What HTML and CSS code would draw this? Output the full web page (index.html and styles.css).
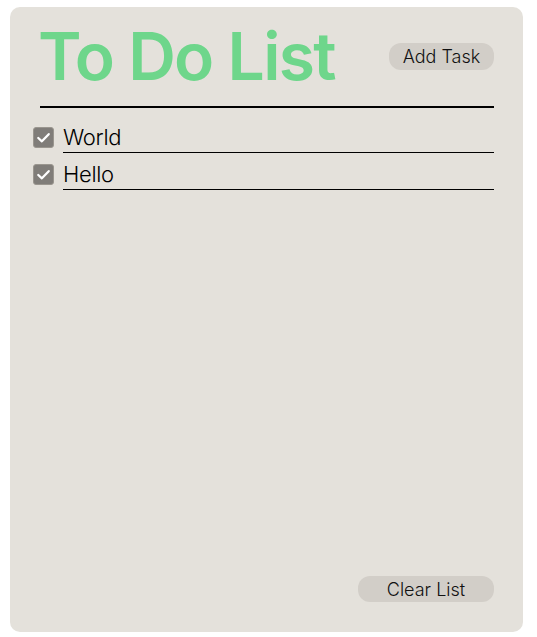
FILE: index.html
```html
<!DOCTYPE html>
<html>
<head>
<meta charset="utf-8">
<link rel="stylesheet" href="styles.css">
</head>
<body>
<div class="card">
  <div class="header">
    <h1 class="title">To Do List</h1>
    <button class="btn add-btn">Add Task</button>
  </div>
  <ul class="list">
    <li class="item">
      <span class="check"><svg viewBox="0 0 20 20" width="19" height="19"><path d="M4.5 10.5 L8.3 14 L15.5 6.5" fill="none" stroke="#fff" stroke-width="2.4" stroke-linecap="round" stroke-linejoin="round"/></svg></span>
      <span class="label">World</span>
    </li>
    <li class="item">
      <span class="check"><svg viewBox="0 0 20 20" width="19" height="19"><path d="M4.5 10.5 L8.3 14 L15.5 6.5" fill="none" stroke="#fff" stroke-width="2.4" stroke-linecap="round" stroke-linejoin="round"/></svg></span>
      <span class="label">Hello</span>
    </li>
  </ul>
  <div class="footer">
    <button class="btn clear-btn">Clear List</button>
  </div>
</div>
</body>
</html>
```
FILE: styles.css
```css
html, body {
  margin: 0;
  padding: 0;
  background: #ffffff;
}
body {
  padding: 7px 14px 5px 10px;
  font-family: "Inter", sans-serif;
}
.card {
  box-sizing: border-box;
  height: 625px;
  background: #e4e1db;
  border-radius: 10px;
  display: flex;
  flex-direction: column;
  padding: 0 29px 30px 23px;
}
.header {
  display: flex;
  align-items: center;
  justify-content: space-between;
  margin-left: 7px;
  height: 99px;
  border-bottom: 2px solid #000;
}
.title {
  margin: 0 0 0 -2px;
  font-size: 66px;
  font-weight: 600;
  color: #6ed68b;
  letter-spacing: -1.7px;
  line-height: 1;
  padding-bottom: 2px;
}
.btn {
  font-family: inherit;
  border: none;
  background: #d2cec8;
  color: #111;
  border-radius: 12px;
  font-size: 18px;
  font-weight: 300;
  padding: 0;
  cursor: pointer;
}
.add-btn {
  width: 105px;
  height: 27px;
  margin-top: 0;
}
.list {
  list-style: none;
  margin: 0;
  padding: 17px 0 0 0;
  flex: 1;
}
.item {
  display: flex;
  align-items: flex-start;
  gap: 9px;
  margin-bottom: 9px;
}
.check {
  width: 21px;
  height: 21px;
  flex: none;
  box-sizing: border-box;
  background: #807d79;
  border: 1px solid #9a968f;
  border-radius: 3px;
  display: flex;
  align-items: center;
  justify-content: center;
  margin-top: 2px;
}
.label {
  flex: 1;
  font-size: 22px;
  font-weight: 300;
  color: #000;
  line-height: 25px;
  padding-bottom: 2px;
  border-bottom: 1px solid #000;
  letter-spacing: -0.3px;
}
.footer {
  display: flex;
  justify-content: flex-end;
}
.clear-btn {
  width: 136px;
  height: 26px;
}
```
